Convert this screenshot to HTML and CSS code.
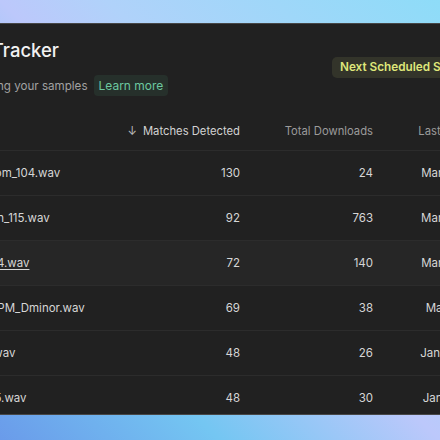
FILE: index.html
```html
<!DOCTYPE html>
<html lang="en">
<head>
<meta charset="utf-8">
<title>Sample Tracker</title>
<link rel="stylesheet" href="styles.css">
</head>
<body>
<main class="panel">
  <header class="head">
    <div class="title-block">
      <h1 class="title">Sample Tracker</h1>
      <div class="sub">
        <span class="sub-text">See who's using your samples</span>
        <a class="learn" href="#">Learn more</a>
      </div>
    </div>
    <span class="next-pill">Next Scheduled Scan: Mar 24, 2025</span>
  </header>

  <div class="table">
    <div class="row row-head">
      <span class="cell name">Sample</span>
      <span class="cell num sorted"><span class="arrow">↓</span>Matches Detected</span>
      <span class="cell num">Total Downloads</span>
      <span class="cell num">Last Detected</span>
    </div>
    <div class="row">
      <span class="cell name">Trap_Kick_Boom_104.wav</span>
      <span class="cell num">130</span>
      <span class="cell num">24</span>
      <span class="cell num">Mar 18, 2025</span>
    </div>
    <div class="row">
      <span class="cell name">Ambient_Organ_115.wav</span>
      <span class="cell num">92</span>
      <span class="cell num">763</span>
      <span class="cell num">Mar 12, 2025</span>
    </div>
    <div class="row row-hover">
      <span class="cell name"><a class="file-link" href="#">Vocal_Chop_84.wav</a></span>
      <span class="cell num">72</span>
      <span class="cell num">140</span>
      <span class="cell num">Mar 10, 2025</span>
    </div>
    <div class="row">
      <span class="cell name">Melodica_90BPM_Dminor.wav</span>
      <span class="cell num">69</span>
      <span class="cell num">38</span>
      <span class="cell num">Mar 4, 2025</span>
    </div>
    <div class="row">
      <span class="cell name">Snare_Roll_2.wav</span>
      <span class="cell num">48</span>
      <span class="cell num">26</span>
      <span class="cell num">Jan 28, 2025</span>
    </div>
    <div class="row">
      <span class="cell name">Hats_Loop_125.wav</span>
      <span class="cell num">48</span>
      <span class="cell num">30</span>
      <span class="cell num">Jan 15, 2025</span>
    </div>
  </div>
</main>
</body>
</html>
```
FILE: styles.css
```css
html, body {
  margin: 0;
  padding: 0;
}

body {
  width: 440px;
  height: 440px;
  overflow: hidden;
  box-sizing: border-box;
  padding-top: 23px;
  background: linear-gradient(45deg, #6a9bea 0%, #74c6f2 25%, #bcc8fb 50%, #b0d2fa 62%, #8edcf8 100%);
  font-family: Inter, "Noto Sans", "Liberation Sans", sans-serif;
}

.panel {
  display: block;
  margin-left: -104px;
  width: 700px;
  height: 392px;
  box-sizing: border-box;
  background: #212121;
  border: 1px solid #474747;
  overflow: hidden;
}

.head {
  display: flex;
  align-items: center;
  padding: 14px 24px 16px 24px;
}

.title-block {
  flex: 0 0 411px;
}

.title {
  margin: 0;
  font-size: 18.5px;
  line-height: 24px;
  font-weight: 500;
  color: #f2f2f2;
}

.sub {
  margin-top: 13px;
  height: 21px;
  display: flex;
  align-items: center;
  gap: 6px;
}

.sub-text {
  font-size: 11.6px;
  color: #a2a2a2;
}

.learn {
  display: inline-flex;
  align-items: center;
  height: 21px;
  padding: 0 5px;
  border-radius: 4px;
  background: #26302b;
  color: #6cc8a0;
  font-size: 12px;
  text-decoration: none;
}

.next-pill {
  display: inline-flex;
  align-items: center;
  height: 21px;
  padding: 0 8px;
  border-radius: 5px;
  background: #33342a;
  color: #dfe77a;
  font-size: 11.75px;
  font-weight: 600;
  white-space: nowrap;
}

.row {
  display: grid;
  grid-template-columns: 184px 135px 133px 119px;
  align-items: center;
  height: 44px;
  padding: 0 24px;
  border-bottom: 1px solid #2c2c2c;
  font-size: 11.5px;
  color: #d6d6d6;
}

.row-head {
  height: 38px;
  font-size: 11.25px;
  color: #9b9b9b;
}

.row-head .sorted {
  color: #d2d2d2;
}

.arrow {
  margin-right: 6px;
  color: #bdbdbd;
}

.row-hover {
  background: #262626;
}

.cell {
  white-space: nowrap;
}

.num {
  text-align: right;
}

.file-link {
  color: #d6d6d6;
  text-decoration: underline;
  text-underline-offset: 2px;
}
```
